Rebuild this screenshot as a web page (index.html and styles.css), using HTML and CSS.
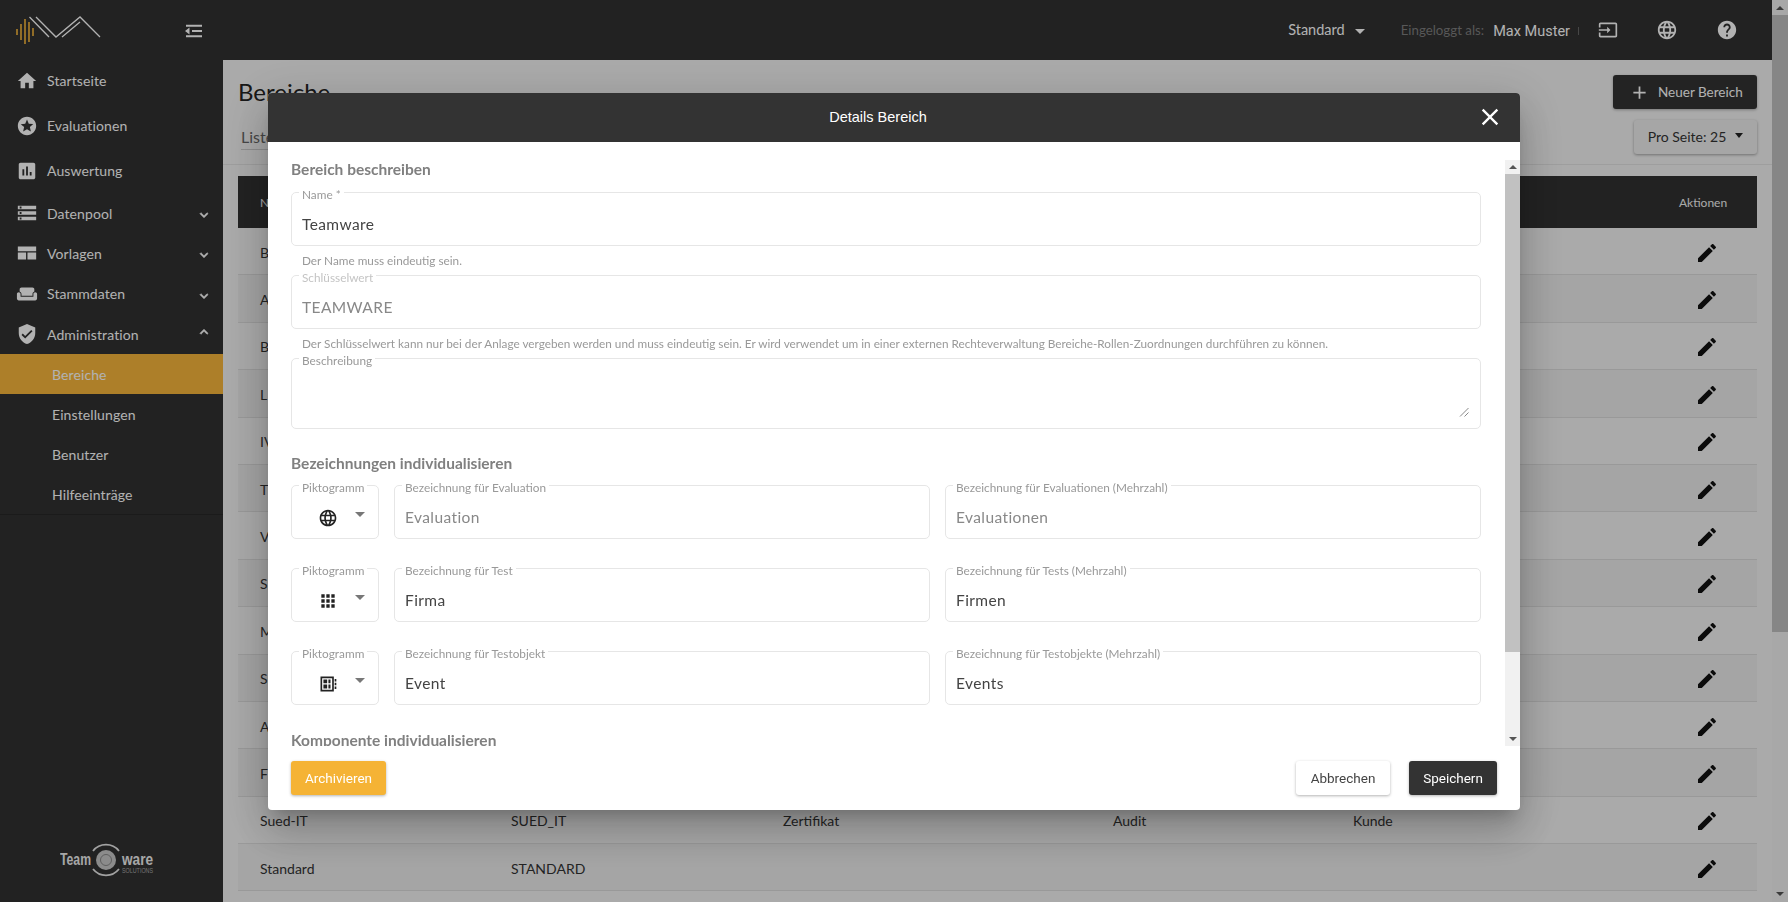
FILE: index.html
```html
<!DOCTYPE html>
<html lang="de">
<head>
<meta charset="utf-8">
<title>Details Bereich</title>
<link rel="stylesheet" href="styles.css">
</head>
<body>
<svg class="defs" width="0" height="0" aria-hidden="true">
<symbol id="i-home" viewBox="0 0 24 24"><path d="M10 20v-6h4v6h5v-8h3L12 3 2 12h3v8z"/></symbol>
<symbol id="i-stars" viewBox="0 0 24 24"><path d="M11.99 2C6.47 2 2 6.48 2 12s4.47 10 9.99 10C17.52 22 22 17.52 22 12S17.52 2 11.99 2zm4.24 16L12 15.45 7.77 18l1.12-4.81-3.73-3.23 4.92-.42L12 5l1.92 4.53 4.92.42-3.73 3.23L16.23 18z"/></symbol>
<symbol id="i-chart" viewBox="0 0 24 24"><path d="M19 3H5c-1.1 0-2 .9-2 2v14c0 1.1.9 2 2 2h14c1.1 0 2-.9 2-2V5c0-1.1-.9-2-2-2zM9 17H7v-7h2v7zm4 0h-2V7h2v10zm4 0h-2v-4h2v4z"/></symbol>
<symbol id="i-storage" viewBox="0 0 24 24"><path d="M2 20h20v-4H2v4zm2-3h2v2H4v-2zM2 4v4h20V4H2zm4 3H4V5h2v2zm-4 7h20v-4H2v4zm2-3h2v2H4v-2z"/></symbol>
<symbol id="i-quilt" viewBox="0 0 24 24"><path d="M2 5h20v5H2zM2 11.5h9V19H2zM12.5 11.5H22V19h-9.500z"/></symbol>
<symbol id="i-sofa" viewBox="0 0 24 24"><path d="M21 10c-1.100 0-2 .9-2 2v3H5v-3c0-1.100-.9-2-2-2s-2 .9-2 2v5c0 1.100.9 2 2 2h18c1.100 0 2-.9 2-2v-5c0-1.100-.9-2-2-2zm-3-5H6c-1.100 0-2 .9-2 2v2.150c1.160.41 2 1.520 2 2.810V14h12v-2.030c0-1.300.84-2.400 2-2.810V7c0-1.100-.9-2-2-2z"/></symbol>
<symbol id="i-shield" viewBox="0 0 24 24"><path d="M12 1L3 5v6c0 5.550 3.840 10.740 9 12 5.160-1.260 9-6.450 9-12V5l-9-4zm-2 16l-4-4 1.410-1.410L10 14.170l6.590-6.590L18 9l-8 8z"/></symbol>
<symbol id="i-down" viewBox="0 0 24 24"><path d="M16.590 8.590L12 13.170 7.410 8.590 6 10l6 6 6-6z"/></symbol>
<symbol id="i-up" viewBox="0 0 24 24"><path d="M12 8l-6 6 1.410 1.410L12 10.830l4.590 4.580L18 14z"/></symbol>
<symbol id="i-exit" viewBox="0 0 24 24"><path d="M21 3.010H3c-1.100 0-2 .9-2 2V9h2V4.990h18v14.030H3V15H1v4.010c0 1.100.9 1.980 2 1.980h18c1.100 0 2-.88 2-1.980v-14c0-1.110-.9-2-2-2zM11 16l4-4-4-4v3H1v2h10v3z"/></symbol>
<symbol id="i-globe" viewBox="0 0 24 24"><path d="M11.990 2C6.470 2 2 6.480 2 12s4.470 10 9.990 10C17.520 22 22 17.520 22 12S17.520 2 11.990 2zm6.930 6h-2.950c-.32-1.250-.78-2.450-1.380-3.560 1.840.63 3.370 1.910 4.330 3.560zM12 4.040c.83 1.200 1.480 2.530 1.910 3.960h-3.820c.43-1.430 1.080-2.760 1.910-3.960zM4.260 14C4.100 13.360 4 12.690 4 12s.1-1.360.26-2h3.380c-.08.66-.14 1.320-.14 2 0 .68.06 1.340.14 2H4.260zm.82 2h2.950c.32 1.250.78 2.450 1.380 3.560-1.840-.63-3.370-1.900-4.330-3.560zm2.950-8H5.080c.96-1.660 2.490-2.930 4.330-3.560C8.810 5.550 8.350 6.750 8.030 8zM12 19.960c-.83-1.200-1.480-2.530-1.910-3.960h3.820c-.43 1.430-1.080 2.760-1.910 3.960zM14.340 14H9.660c-.09-.66-.16-1.320-.16-2 0-.68.07-1.350.16-2h4.680c.09.65.16 1.320.16 2 0 .68-.07 1.340-.16 2zm.25 5.560c.6-1.110 1.060-2.310 1.380-3.560h2.950c-.96 1.650-2.490 2.930-4.330 3.560zM16.360 14c.08-.66.14-1.320.14-2 0-.68-.06-1.340-.14-2h3.380c.16.64.26 1.310.26 2s-.1 1.360-.26 2h-3.380z"/></symbol>
<symbol id="i-help" viewBox="0 0 24 24"><path d="M12 2C6.480 2 2 6.480 2 12s4.480 10 10 10 10-4.480 10-10S17.520 2 12 2zm1 17h-2v-2h2v2zm2.070-7.750l-.9.92C13.450 12.900 13 13.500 13 15h-2v-.5c0-1.100.45-2.100 1.170-2.830l1.240-1.260c.37-.36.59-.86.59-1.410 0-1.100-.9-2-2-2s-2 .9-2 2H8c0-2.210 1.790-4 4-4s4 1.790 4 4c0 .88-.36 1.680-.93 2.250z"/></symbol>
<symbol id="i-edit" viewBox="0 0 24 24"><path d="M3 17.250V21h3.750L17.810 9.940l-3.750-3.750L3 17.250zM20.710 7.040c.39-.39.39-1.020 0-1.410l-2.340-2.340c-.39-.39-1.020-.39-1.410 0l-1.830 1.830 3.750 3.750 1.830-1.830z"/></symbol>
<symbol id="i-apps" viewBox="0 0 24 24"><path d="M4 8h4V4H4v4zm6 12h4v-4h-4v4zm-6 0h4v-4H4v4zm0-6h4v-4H4v4zm6 0h4v-4h-4v4zm6-10v4h4V4h-4zm-6 4h4V4h-4v4zm6 6h4v-4h-4v4zm0 6h4v-4h-4v4z"/></symbol>
<symbol id="i-block" viewBox="0 0 24 24"><path d="M3 3h16v18H3V3zm2 2v14h12V5H5zm1.500 1.500h4.500V11H6.500V6.500zm0 6H11v5H6.500v-5zm6-6H15V11h-2.500V6.500zm0 6H15v5h-2.500v-5zM20 6h2v3h-2V6zm0 4.500h2v3h-2v-3zm0 4.500h2v3h-2v-3z"/></symbol>
<symbol id="i-close" viewBox="0 0 24 24"><path d="M19 6.410L17.590 5 12 10.590 6.410 5 5 6.410 10.590 12 5 17.590 6.410 19 12 13.410 17.590 19 19 17.590 13.410 12z"/></symbol>
<symbol id="i-add" viewBox="0 0 24 24"><path d="M19 13h-6v6h-2v-6H5v-2h6V5h2v6h6v2z"/></symbol>
</svg>

<div class="app">
  <aside class="sidebar">
    <div class="brand">
      <svg class="brand-logo" width="104" height="44" viewBox="0 0 104 44">
        <g class="logo-wave"><path d="M17 29v6M21 24v16M25 19v26M29 22v20M33 28v8"/></g>
        <g class="logo-lines"><path d="M29.500 17L49 37M36 17L56 37L80 17L100 37M62 37L80 22"/></g>
      </svg>
      <svg class="collapse-icon" width="20" height="14" viewBox="0 0 20 14"><path d="M3 0.800h16v2H3zM9 6h10v2H9zM3 11.200h16v2H3zM6.500 3.500L2 7l4.500 3.500"/></svg>
    </div>
    <nav class="nav">
      <a class="nav-item tall"><svg class="nav-icon"><use href="#i-home"/></svg>Startseite</a>
      <a class="nav-item tall"><svg class="nav-icon"><use href="#i-stars"/></svg>Evaluationen</a>
      <a class="nav-item tall"><svg class="nav-icon"><use href="#i-chart"/></svg>Auswertung</a>
      <a class="nav-item"><svg class="nav-icon"><use href="#i-storage"/></svg>Datenpool<svg class="chev"><use href="#i-down"/></svg></a>
      <a class="nav-item"><svg class="nav-icon"><use href="#i-quilt"/></svg>Vorlagen<svg class="chev"><use href="#i-down"/></svg></a>
      <a class="nav-item mid"><svg class="nav-icon"><use href="#i-sofa"/></svg>Stammdaten<svg class="chev"><use href="#i-down"/></svg></a>
      <a class="nav-item"><svg class="nav-icon"><use href="#i-shield"/></svg>Administration<svg class="chev chev-up"><use href="#i-up"/></svg></a>
      <div class="subnav">
        <a class="sub-item active">Bereiche</a>
        <a class="sub-item">Einstellungen</a>
        <a class="sub-item">Benutzer</a>
        <a class="sub-item">Hilfeeinträge</a>
      </div>
    </nav>
    <div class="partner">
      <svg width="130" height="40" viewBox="0 0 130 40">
        <text class="partner-word" x="0" y="25" textLength="31" lengthAdjust="spacingAndGlyphs">Team</text>
        <circle class="partner-core" cx="46" cy="20" r="10"/>
        <circle class="partner-ring" cx="46" cy="20" r="5.500"/>
        <path class="partner-arc" d="M33 11A16.500 16.500 0 0 1 59 11M33 29A16.500 16.500 0 0 0 59 29"/>
        <text class="partner-word" x="62" y="25" textLength="31" lengthAdjust="spacingAndGlyphs">ware</text>
        <text class="partner-sub" x="62" y="33" textLength="31" lengthAdjust="spacingAndGlyphs">SOLUTIONS</text>
      </svg>
    </div>
  </aside>

  <div class="main">
    <header class="topbar">
      <span class="scope">Standard</span><span class="caret caret-top"></span>
      <span class="login-label">Eingeloggt als:</span>
      <span class="login-name">Max Muster</span>
      <span class="login-sep"></span>
      <svg class="top-icon exit"><use href="#i-exit"/></svg>
      <svg class="top-icon"><use href="#i-globe"/></svg>
      <svg class="top-icon"><use href="#i-help"/></svg>
    </header>
    <div class="page">
      <div class="page-head">
        <div class="page-titles">
          <h1 class="page-title">Bereiche</h1>
          <div class="tab">Liste</div>
        </div>
        <div class="page-actions">
          <button class="btn-new"><svg class="btn-new-icon"><use href="#i-add"/></svg>Neuer Bereich</button>
          <button class="btn-page">Pro Seite: 25<span class="caret caret-page"></span></button>
        </div>
      </div>
      <div class="table">
        <div class="row row-head"><span>N</span><span></span><span></span><span></span><span></span><span class="actions-label">Aktionen</span></div>
        <div class="row"><span>B</span><span></span><span></span><span></span><span></span><svg class="edit"><use href="#i-edit"/></svg></div>
        <div class="row"><span>A</span><span></span><span></span><span></span><span></span><svg class="edit"><use href="#i-edit"/></svg></div>
        <div class="row"><span>B</span><span></span><span></span><span></span><span></span><svg class="edit"><use href="#i-edit"/></svg></div>
        <div class="row"><span>L</span><span></span><span></span><span></span><span></span><svg class="edit"><use href="#i-edit"/></svg></div>
        <div class="row"><span>IV</span><span></span><span></span><span></span><span></span><svg class="edit"><use href="#i-edit"/></svg></div>
        <div class="row"><span>T</span><span></span><span></span><span></span><span></span><svg class="edit"><use href="#i-edit"/></svg></div>
        <div class="row"><span>V</span><span></span><span></span><span></span><span></span><svg class="edit"><use href="#i-edit"/></svg></div>
        <div class="row"><span>S</span><span></span><span></span><span></span><span></span><svg class="edit"><use href="#i-edit"/></svg></div>
        <div class="row"><span>M</span><span></span><span></span><span></span><span></span><svg class="edit"><use href="#i-edit"/></svg></div>
        <div class="row"><span>S</span><span></span><span></span><span></span><span></span><svg class="edit"><use href="#i-edit"/></svg></div>
        <div class="row"><span>A</span><span></span><span></span><span></span><span></span><svg class="edit"><use href="#i-edit"/></svg></div>
        <div class="row"><span>F</span><span></span><span></span><span></span><span></span><svg class="edit"><use href="#i-edit"/></svg></div>
        <div class="row"><span>Sued-IT</span><span>SUED_IT</span><span>Zertifikat</span><span>Audit</span><span>Kunde</span><svg class="edit"><use href="#i-edit"/></svg></div>
        <div class="row"><span>Standard</span><span>STANDARD</span><span></span><span></span><span></span><svg class="edit"><use href="#i-edit"/></svg></div>
      </div>
    </div>
  </div>

  <div class="page-scroll">
    <span class="arrow-up"></span>
    <div class="page-thumb"></div>
    <span class="arrow-down"></span>
  </div>
</div>

<div class="overlay">
  <section class="modal">
    <header class="modal-head">
      <h2 class="modal-title">Details Bereich</h2>
      <svg class="modal-close"><use href="#i-close"/></svg>
    </header>
    <div class="modal-scroll">
      <div class="modal-body">
        <h3 class="section first-section">Bereich beschreiben</h3>
        <div class="field"><label>Name *</label><span class="value">Teamware</span></div>
        <p class="help">Der Name muss eindeutig sein.</p>
        <div class="field"><label class="faint">Schlüsselwert</label><span class="value muted">TEAMWARE</span></div>
        <p class="help">Der Schlüsselwert kann nur bei der Anlage vergeben werden und muss eindeutig sein. Er wird verwendet um in einer externen Rechteverwaltung Bereiche-Rollen-Zuordnungen durchführen zu können.</p>
        <div class="field field-area"><label>Beschreibung</label>
          <svg class="grip" width="10" height="10" viewBox="0 0 10 10"><path d="M9.500 1L1 9.500M9.500 5.500L5.500 9.500"/></svg>
        </div>
        <h3 class="section">Bezeichnungen individualisieren</h3>
        <div class="name-rows">
          <div class="name-row">
            <div class="field"><label>Piktogramm</label><svg class="picto"><use href="#i-globe"/></svg><span class="caret caret-picto"></span></div>
            <div class="field"><label>Bezeichnung für Evaluation</label><span class="value muted">Evaluation</span></div>
            <div class="field"><label>Bezeichnung für Evaluationen (Mehrzahl)</label><span class="value muted">Evaluationen</span></div>
          </div>
          <div class="name-row">
            <div class="field"><label>Piktogramm</label><svg class="picto"><use href="#i-apps"/></svg><span class="caret caret-picto"></span></div>
            <div class="field"><label>Bezeichnung für Test</label><span class="value">Firma</span></div>
            <div class="field"><label>Bezeichnung für Tests (Mehrzahl)</label><span class="value">Firmen</span></div>
          </div>
          <div class="name-row">
            <div class="field"><label>Piktogramm</label><svg class="picto"><use href="#i-block"/></svg><span class="caret caret-picto"></span></div>
            <div class="field"><label>Bezeichnung für Testobjekt</label><span class="value">Event</span></div>
            <div class="field"><label>Bezeichnung für Testobjekte (Mehrzahl)</label><span class="value">Events</span></div>
          </div>
        </div>
        <h3 class="section last-section">Komponente individualisieren</h3>
      </div>
      <div class="modal-bar">
        <span class="arrow-up small"></span>
        <div class="modal-thumb"></div>
        <span class="arrow-down small"></span>
      </div>
    </div>
    <footer class="modal-foot">
      <button class="btn btn-archive">Archivieren</button>
      <div class="foot-right">
        <button class="btn btn-cancel">Abbrechen</button>
        <button class="btn btn-save">Speichern</button>
      </div>
    </footer>
  </section>
</div>
</body>
</html>
```

FILE: styles.css
```css
* { box-sizing: border-box; }
html, body { margin: 0; height: 100%; overflow: hidden; }
body { font-family: "Lato", "Open Sans", sans-serif; background: #f4f4f4; color: #333; }
.defs { display: block; height: 0; }
button { font-family: "Roboto", sans-serif; border: 0; cursor: pointer; }
h1, h2, h3, p { margin: 0; font-weight: normal; }

.app { display: flex; height: 902px; overflow: hidden; }

/* Sidebar */
.sidebar { width: 223px; flex: none; background: #313131; color: #fff; display: flex; flex-direction: column; }
.brand { height: 60px; display: flex; align-items: center; justify-content: space-between; padding-right: 20px; }
.brand-logo { display: block; margin-top: -16px; }
.logo-wave path { stroke: #f8b73c; stroke-width: 1.600; fill: none; }
.logo-lines path { stroke: #fff; stroke-width: 1.300; fill: none; }
.collapse-icon { fill: #fff; stroke: none; margin-top: 1px; }
.nav { display: flex; flex-direction: column; margin-top: -2px; }
.nav-item { height: 40px; display: flex; align-items: center; font-size: 14px; padding-left: 16px; letter-spacing: 0.1px; }
.nav-item.tall { height: 45px; }
.nav-item.mid { height: 41px; }
.nav-icon { width: 22px; height: 22px; fill: #fff; margin-right: 9px; flex: none; }
.chev { width: 16px; height: 16px; fill: #fff; margin: 4px 11px 0 auto; stroke: #fff; stroke-width: 1; }
.chev-up { margin-top: -4px; }
.subnav { display: flex; flex-direction: column; border-bottom: 1px solid #272727; }
.sub-item { height: 40px; display: flex; align-items: center; padding-left: 52px; font-size: 14px; letter-spacing: 0.1px; }
.sub-item.active { background: #f8b73c; }
.partner { margin-top: auto; padding: 0 0 22px 60px; }
.partner svg { display: block; }
.partner-word { font-family: "Liberation Sans", sans-serif; font-weight: bold; font-size: 16px; fill: #f0f0f0; }
.partner-sub { font-family: "Liberation Sans", sans-serif; font-size: 6.500px; fill: #a8a8a8; }
.partner-core { fill: #c8c8c8; }
.partner-ring { fill: none; stroke: #888; stroke-width: 1; }
.partner-arc { fill: none; stroke: #e8e8e8; stroke-width: 1.800; }

/* Main column */
.main { flex: 1; min-width: 0; display: flex; flex-direction: column; }
.topbar { height: 60px; flex: none; background: #313131; color: #fff; display: flex; align-items: center; justify-content: flex-end; padding-right: 34px; font-size: 14.500px; }
.scope { font-size: 14.500px; margin-top: -2px; }
.caret { display: inline-block; width: 0; height: 0; border-left: 5px solid transparent; border-right: 5px solid transparent; border-top: 5px solid currentColor; }
.caret-top { margin: 2px 36px 0 10px; }
.login-label { color: #7e7e7e; font-size: 13.300px; margin-right: 9px; }
.login-name { font-family: "Roboto", sans-serif; font-size: 14.500px; margin-top: 2px; }
.login-sep { width: 1px; height: 8px; background: #666; margin: 2px 19px 0 8px; }
.top-icon { width: 22px; height: 22px; fill: #fff; margin-left: 38px; }
.top-icon.exit { width: 20px; height: 20px; margin-left: 0; }

.page { flex: 1; min-height: 0; overflow: hidden; }
.page-head { height: 105px; margin: 0; border-bottom: 1px solid #e2e2e2; padding: 15px 15px 0; display: flex; justify-content: space-between; align-items: flex-start; }
.page-title { font-size: 24px; line-height: 34px; color: #222; }
.tab { margin: 16px 0 0 3px; width: 60px; font-size: 16px; line-height: 24px; color: #666; border-bottom: 1px solid #ccc; }
.page-actions { display: flex; flex-direction: column; align-items: flex-end; gap: 11px; }
.btn-new { width: 144px; height: 34px; background: #333; color: #fff; border-radius: 3px; font-family: "Lato", sans-serif; font-size: 13.500px; white-space: nowrap; display: flex; align-items: center; padding: 0 0 0 16px; box-shadow: 0 1px 3px rgba(0,0,0,.3); gap: 8px; }
.btn-new-icon { width: 21px; height: 21px; fill: #fff; flex: none; }
.btn-page { width: 123px; height: 34px; background: #eee; color: #333; border-radius: 3px; font-family: "Lato", sans-serif; font-size: 14px; box-shadow: 0 1px 3px rgba(0,0,0,.35); display: flex; align-items: center; justify-content: center; gap: 9px; padding-bottom: 2px; }
.caret-page { margin-top: -3px; border-left-width: 4.500px; border-right-width: 4.500px; color: #222; }

.table { margin: 11px 15px 0; }
.row { height: 47.400px; display: grid; grid-template-columns: 251px 272px 330px 240px 1fr 78px; align-items: center; padding: 2px 0 0 22px; border-bottom: 1px solid #dcdcdc; font-size: 14px; color: #333; }
.row:nth-child(odd) { background: #ececec; }
.row:nth-child(even) { background: #f4f4f4; }
.row.row-head { height: 52px; padding-top: 0; background: #313131; color: #f3f3f3; border: 0; font-size: 12px; }
.actions-label { justify-self: start; }
.edit { width: 24px; height: 24px; fill: #111; margin: 1px 0 0 16px; }

.page-scroll { width: 16px; flex: none; background: #f1f1f1; display: flex; flex-direction: column; align-items: center; position: relative; }
.page-thumb { width: 16px; height: 617px; margin-top: 5px; background: #c1c1c1; }
.arrow-up, .arrow-down { display: block; width: 0; height: 0; border-left: 4px solid transparent; border-right: 4px solid transparent; flex: none; }
.arrow-up { border-bottom: 4px solid #555; margin-top: 6px; }
.arrow-down { border-top: 4px solid #555; margin-top: auto; margin-bottom: 6px; }

/* Modal */
.overlay { position: fixed; inset: 0; background: rgba(0,0,0,.3); display: flex; justify-content: flex-start; align-items: flex-start; padding: 93px 0 0 268px; }
.modal { width: 1252px; height: 717px; background: #fff; border-radius: 4px; display: flex; flex-direction: column; overflow: hidden; box-shadow: 0 11px 15px -7px rgba(0,0,0,.2), 0 24px 38px 3px rgba(0,0,0,.14), 0 9px 46px 8px rgba(0,0,0,.12); }
.modal-head { height: 49px; flex: none; background: #333; color: #fff; display: flex; align-items: center; justify-content: center; padding: 0 32px 2px 0; position: relative; }
.modal-title { font-family: "Liberation Sans", sans-serif; font-size: 14.500px; }
.modal-close { position: absolute; right: 16px; top: 10px; width: 28px; height: 28px; fill: #fff; }
.modal-scroll { height: 604px; flex: none; display: flex; overflow: hidden; }
.modal-body { flex: 1; min-width: 0; padding: 17px 24px 0 23px; overflow: hidden; }
.modal-bar { width: 15px; flex: none; margin-top: 18px; background: #f1f1f1; display: flex; flex-direction: column; align-items: center; }
.modal-thumb { width: 15px; height: 478px; margin-top: 5px; background: #c1c1c1; }
.arrow-up.small { margin-top: 5px; }
.arrow-down.small { margin-bottom: 5px; }

.section { font-size: 15.500px; font-weight: bold; line-height: 20px; color: #808080; margin: 24px 0 12px; }
.first-section { margin: 0 0 13px; }
.last-section { margin: 25px 0 0; }
.field { position: relative; height: 54px; border: 1px solid #e6e6e6; border-radius: 5px; display: flex; align-items: center; padding: 10px 10px 0; }
.field label { position: absolute; top: -5px; left: 7px; padding: 0 3px; background: #fff; font-size: 11.800px; line-height: 14px; color: #999; white-space: nowrap; }
.field label.faint { color: #c4c4c4; }
.value { font-size: 15.500px; letter-spacing: 0.4px; color: #444; }
.value.muted { color: #888; }
.help { font-size: 11.780px; line-height: 29px; color: #999; padding-left: 11px; white-space: nowrap; }
.field-area { height: 71px; }
.grip { position: absolute; right: 11px; bottom: 11px; stroke: #888; fill: none; stroke-width: 1; }
.name-rows { display: flex; flex-direction: column; gap: 29px; }
.name-row { display: grid; grid-template-columns: 88px 536px 536px; gap: 15px; }
.picto { width: 20px; height: 20px; fill: #222; margin-left: 16px; margin-top: 1px; flex: none; }
.caret-picto { color: #777; margin: -5px 0 0 17px; }

.modal-foot { flex: 1; display: flex; justify-content: space-between; align-items: flex-start; padding: 15px 23px 0; }
.foot-right { display: flex; gap: 19px; }
.btn { height: 34px; border-radius: 3px; font-size: 13.500px; box-shadow: 0 1px 3px rgba(0,0,0,.3); padding: 0; }
.btn-archive { width: 95px; background: #f5b335; color: #fff; }
.btn-cancel { width: 94px; background: #fff; color: #444; }
.btn-save { width: 88px; background: #333; color: #fff; }
```
